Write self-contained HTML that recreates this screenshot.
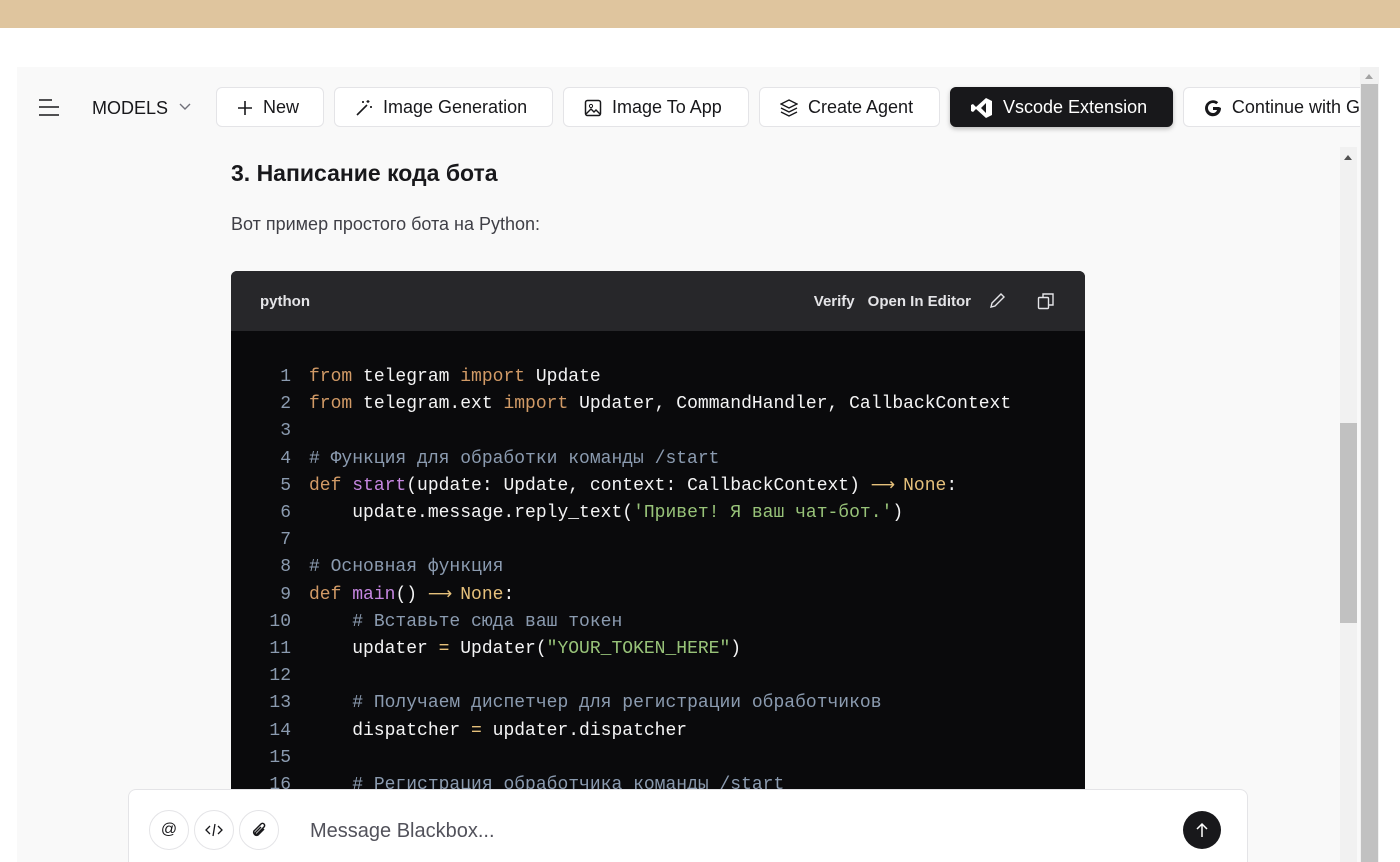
<!DOCTYPE html>
<html><head><meta charset="utf-8"><style>
*{box-sizing:border-box;margin:0;padding:0}
html,body{width:1400px;height:862px;overflow:hidden}
body{background:#fff;font-family:"Liberation Sans",sans-serif;position:relative}
.banner{position:absolute;left:0;top:0;width:1400px;height:28px;background:#dfc59e}
.panel{position:absolute;left:17px;top:67px;width:1343px;height:795px;background:#f9f9f9}
.osb{position:absolute;left:1360px;top:67px;width:19px;height:795px;background:#f1f1f1}
.osb .th{position:absolute;left:1px;top:17px;width:17px;height:778px;background:#c1c1c1}
.arrow{position:absolute;width:0;height:0;border-left:4px solid transparent;border-right:4px solid transparent;border-bottom:5px solid #a3a3a3}
.isb{position:absolute;left:1340px;top:147px;width:17px;height:715px;background:#f1f1f1}
.isb .th{position:absolute;left:0;top:276px;width:17px;height:200px;background:#c1c1c1}
.btn{position:absolute;top:87px;height:40px;border:1px solid #e4e4e7;border-radius:6px;background:#fff;font-size:18px;color:#18181b;display:flex;align-items:center;padding-left:20px;white-space:nowrap;overflow:hidden;padding-top:1px}
.btn svg{margin-right:10px}
.dark{background:#18181b;color:#fff;border-color:#18181b;box-shadow:0 2px 5px rgba(0,0,0,.25)}
h3{position:absolute;left:231px;top:160px;font-size:23px;font-weight:bold;color:#18181b}
.p{position:absolute;left:231px;top:214px;font-size:18px;color:#3f3f46}
.code{position:absolute;left:231px;top:271px;width:854px;height:591px;background:#0a0a0c;border-radius:6px 6px 0 0;overflow:hidden}
.ch{height:60px;background:#27272a;display:flex;align-items:center;padding-left:29px;color:#e4e4e7;font-size:15px;font-weight:bold;position:relative}
.ch .r{position:absolute;right:30px;top:0;height:60px;display:flex;align-items:center;gap:13px}
pre{position:absolute;left:0;top:93px;font-family:"Liberation Mono",monospace;font-size:18px;line-height:27.2px;color:#f4f4f5}
.n{display:inline-block;width:60px;text-align:right;color:#8b9bb0;margin-right:18px}
.k{color:#d19a66}.f{color:#c586e0}.c{color:#8b9bb0}.s{color:#98c379}.y{color:#e5c07b}.o{color:#e5c07b}
.ar{color:#e5c07b;font-family:"DejaVu Sans",sans-serif;font-size:17px;line-height:0;display:inline-block;width:21.6px;text-align:center;vertical-align:baseline}
.input{position:absolute;left:128px;top:789px;width:1120px;height:73px;background:#fff;border:1px solid #e4e4e7;border-bottom:none;border-radius:8px 8px 0 0}
.ib{position:absolute;top:20px;width:40px;height:40px;border-radius:50%;border:1px solid #e4e4e7;background:#fff;display:flex;align-items:center;justify-content:center;font-size:16px;color:#18181b}
.ph{position:absolute;left:181px;top:30px;font-size:20px;color:#52525b}
.send{position:absolute;left:1054px;top:21px;width:38px;height:38px;border-radius:50%;background:#18181b;display:flex;align-items:center;justify-content:center}
</style></head><body>
<div class="banner"></div>
<div class="panel"></div>
<div class="osb"><div class="th"></div><div class="arrow" style="left:5px;top:7px"></div></div>
<div class="isb"><div class="th"></div><div class="arrow" style="left:4px;top:8px;border-bottom-color:#505050"></div></div>

<svg style="position:absolute;left:38px;top:98px" width="22" height="20"><path d="M1 2h13M1 9h20M1 17h20" stroke="#18181b" stroke-width="1.6"/></svg>
<div style="position:absolute;left:92px;top:98px;font-size:18px;color:#18181b">MODELS</div>
<svg style="position:absolute;left:179px;top:102px" width="13" height="10"><path d="M1 2l5 5 5-5" stroke="#71717a" fill="none" stroke-width="1.4"/></svg>

<div class="btn" style="left:216px;width:108px"><svg width="16" height="16"><path d="M8 1v14M1 8h14" stroke="#18181b" stroke-width="1.6"/></svg>New</div>
<div class="btn" style="left:334px;width:219px"><svg width="18" height="18"><path d="M2 16L12 6" stroke="#18181b" stroke-width="1.6"/><path d="M13 1v3M11.5 2.5h3M16 7v2M15 8h2M8 2v2M7 3h2" stroke="#18181b" stroke-width="1.2"/></svg>Image Generation</div>
<div class="btn" style="left:563px;width:186px"><svg width="18" height="18"><rect x="1.5" y="1.5" width="15" height="15" rx="2" stroke="#18181b" fill="none" stroke-width="1.5"/><circle cx="7" cy="7" r="1.6" fill="none" stroke="#18181b"/><path d="M2 15l5-5 3 3 2-2 4 4" stroke="#18181b" fill="none" stroke-width="1.4"/></svg>Image To App</div>
<div class="btn" style="left:759px;width:181px"><svg width="18" height="18"><path d="M9 1l8 4-8 4-8-4z" stroke="#18181b" fill="none" stroke-width="1.4"/><path d="M1 9l8 4 8-4M1 13l8 4 8-4" stroke="#18181b" fill="none" stroke-width="1.4"/></svg>Create Agent</div>
<div class="btn dark" style="left:950px;width:223px"><svg width="22" height="22" viewBox="0 0 22 22"><path d="M15 1l6 3v14l-6 3L5 12l-3 3-2-1V8l2-1 3 3zM15 6l-5 5 5 5z" fill="#fff" fill-rule="evenodd"/></svg>Vscode Extension</div>
<div class="btn" style="left:1183px;width:177px;border-right:none;border-radius:6px 0 0 6px"><svg width="18" height="18"><path d="M15 8H9v3h4c-.6 2-2.2 3-4 3a5 5 0 1 1 3.2-8.8l2-2A8 8 0 1 0 17 9z" fill="#18181b"/></svg>Continue with G</div>

<h3>3. Написание кода бота</h3>
<div class="p">Вот пример простого бота на Python:</div>

<div class="code">
<div class="ch">python<div class="r"><span>Verify</span><span>Open In Editor</span>
<svg width="18" height="18" style="margin-left:4px"><path d="M13 2l3 3-9 9-4 1 1-4z" stroke="#e4e4e7" fill="none" stroke-width="1.4"/></svg>
<svg width="18" height="18" style="margin-left:18px"><rect x="1.5" y="5.5" width="10" height="11" rx="1" stroke="#e4e4e7" fill="none" stroke-width="1.4"/><path d="M6 5V2h10v11h-4" stroke="#e4e4e7" fill="none" stroke-width="1.4"/></svg></div></div>
<pre><span class="n">1</span><span class="k">from</span> telegram <span class="k">import</span> Update
<span class="n">2</span><span class="k">from</span> telegram.ext <span class="k">import</span> Updater, CommandHandler, CallbackContext
<span class="n">3</span>
<span class="n">4</span><span class="c"># Функция для обработки команды /start</span>
<span class="n">5</span><span class="k">def</span> <span class="f">start</span>(update: Update, context: CallbackContext) <span class="ar">⟶</span> <span class="y">None</span>:
<span class="n">6</span>    update.message.reply_text(<span class="s">'Привет! Я ваш чат-бот.'</span>)
<span class="n">7</span>
<span class="n">8</span><span class="c"># Основная функция</span>
<span class="n">9</span><span class="k">def</span> <span class="f">main</span>() <span class="ar">⟶</span> <span class="y">None</span>:
<span class="n">10</span>    <span class="c"># Вставьте сюда ваш токен</span>
<span class="n">11</span>    updater <span class="o">=</span> Updater(<span class="s">"YOUR_TOKEN_HERE"</span>)
<span class="n">12</span>
<span class="n">13</span>    <span class="c"># Получаем диспетчер для регистрации обработчиков</span>
<span class="n">14</span>    dispatcher <span class="o">=</span> updater.dispatcher
<span class="n">15</span>
<span class="n">16</span>    <span class="c"># Регистрация обработчика команды /start</span>
</pre>
</div>

<div class="input">
<div class="ib" style="left:20px">@</div>
<div class="ib" style="left:65px"><svg width="18" height="16"><path d="M5 4L1 8l4 4M13 4l4 4-4 4M10 2L8 14" stroke="#18181b" fill="none" stroke-width="1.3"/></svg></div>
<div class="ib" style="left:110px"><svg width="18" height="18"><path d="M14 8l-6 6a3 3 0 0 1-4-4l7-7a2 2 0 0 1 3 3l-7 7a1 1 0 0 1-1.5-1.5L11 6" stroke="#18181b" fill="none" stroke-width="1.5"/></svg></div>
<div class="ph">Message Blackbox...</div>
<div class="send"><svg width="14" height="16"><path d="M7 15V2M2 7l5-5 5 5" stroke="#fff" fill="none" stroke-width="1.5"/></svg></div>
</div>
</body></html>
